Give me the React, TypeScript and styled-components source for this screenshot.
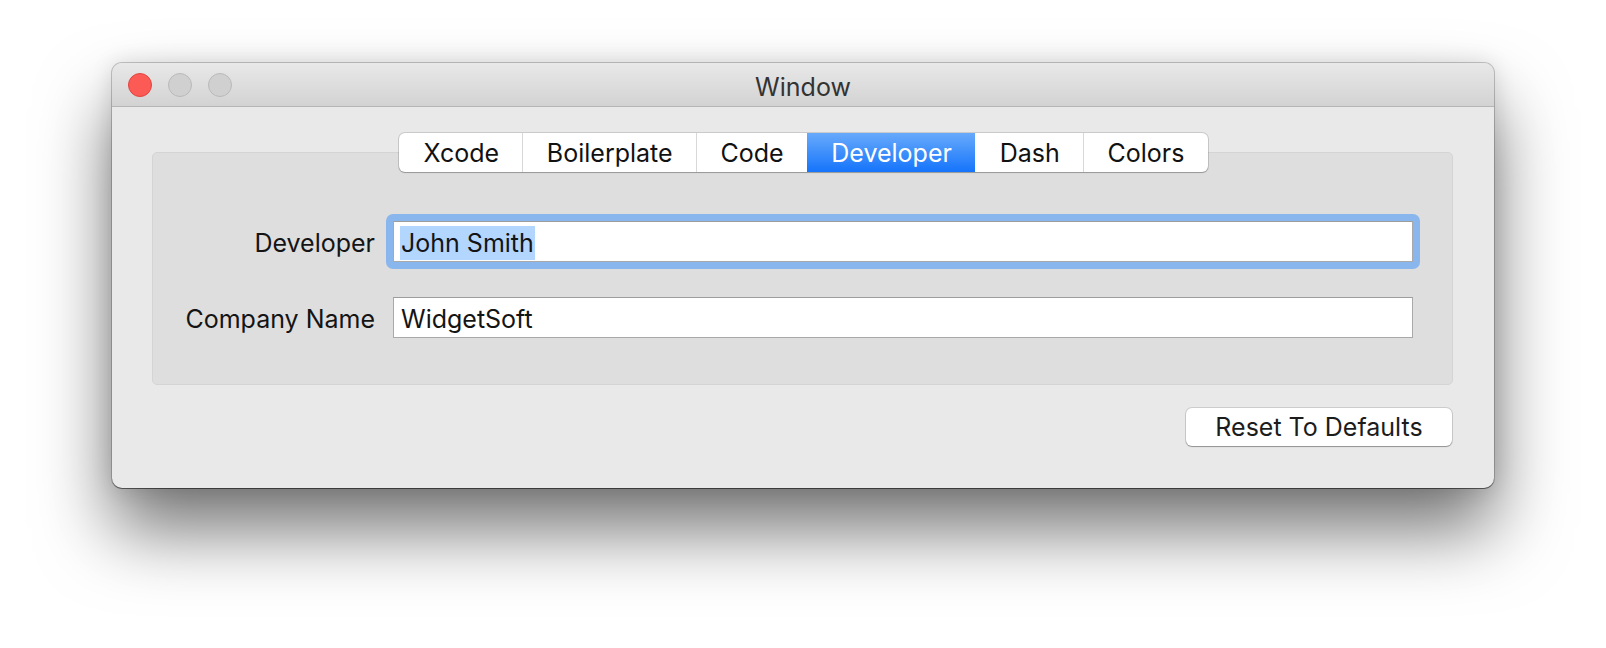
import React from "react";
import styled, { createGlobalStyle } from "styled-components";

const GlobalStyle = createGlobalStyle`
  html, body {
    margin: 0;
    padding: 0;
    background: #ffffff;
  }
  body {
    width: 1606px;
    height: 648px;
    overflow: hidden;
    font-family: "Inter", "Noto Sans", "Liberation Sans", sans-serif;
    -webkit-font-smoothing: antialiased;
  }
  * { box-sizing: border-box; }
`;

const Page = styled.div`
  width: 1606px;
  height: 648px;
  padding: 63px 0 0 112px;
`;

const Window = styled.div`
  width: 1382px;
  height: 425px;
  display: flex;
  flex-direction: column;
  background: #e9e9e9;
  border-radius: 10px;
  overflow: hidden;
  box-shadow:
    0 0 0 1px rgba(0, 0, 0, 0.2),
    0 1px 0 rgba(0, 0, 0, 0.4),
    0 0 22px rgba(0, 0, 0, 0.12),
    0 42px 72px rgba(0, 0, 0, 0.55);
`;

const TitleBar = styled.div`
  flex: none;
  height: 44px;
  display: grid;
  grid-template-columns: 1fr auto 1fr;
  align-items: center;
  background: linear-gradient(#e8e8e8, #d3d3d3);
  border-bottom: 1px solid #b5b5b5;
`;

const Lights = styled.div`
  display: flex;
  gap: 16px;
  padding-left: 16px;
`;

const Light = styled.span<{ $color: string; $edge: string }>`
  width: 24px;
  height: 24px;
  border-radius: 50%;
  background: ${(p) => p.$color};
  border: 1px solid ${(p) => p.$edge};
`;

const Title = styled.div`
  font-size: 25px;
  color: #333333;
  padding-top: 4px;
`;

const Content = styled.div`
  flex: 1;
  display: flex;
  flex-direction: column;
  padding: 26px 41px 0 40px;
`;

const TabBar = styled.div`
  align-self: center;
  display: flex;
  height: 39px;
  margin-bottom: -20px;
  margin-left: 2px;
  z-index: 1;
  background: #ffffff;
  border-radius: 6px;
  overflow: hidden;
  box-shadow:
    0 0 0 1px rgba(0, 0, 0, 0.13),
    0 1px 1px rgba(0, 0, 0, 0.22);
`;

const Tab = styled.div<{ $active?: boolean; $divider?: boolean }>`
  display: flex;
  align-items: center;
  justify-content: center;
  padding: 1px 23.4px 0;
  font-size: 25px;
  color: ${(p) => (p.$active ? "#ffffff" : "#111111")};
  background: ${(p) =>
    p.$active ? "linear-gradient(#68aafb, #1574fb)" : "transparent"};
  border-left: 1px solid ${(p) => (p.$divider ? "#d8d8d8" : "transparent")};
`;

const Box = styled.div`
  height: 233px;
  display: grid;
  grid-template-columns: 222px 1fr;
  grid-auto-rows: 41px;
  column-gap: 18px;
  row-gap: 35px;
  align-content: start;
  padding: 68px 39px 0 0;
  background: #dedede;
  border: 1px solid #d4d4d4;
  border-radius: 5px;
`;

const Label = styled.div`
  align-self: center;
  text-align: right;
  font-size: 25px;
  color: #141414;
  padding-top: 3px;
`;

const FocusRing = styled.div`
  margin: -7px;
  padding: 7px;
  border-radius: 7px;
  background: #89b6ec;
`;

const Field = styled.div`
  height: 41px;
  display: flex;
  align-items: center;
  padding: 2px 6px 0;
  background: #ffffff;
  border: 1px solid #a9a9a9;
  border-top-color: #9d9d9d;
  font-size: 25px;
  color: #141414;
`;

const Selection = styled.span`
  display: inline-block;
  line-height: 34px;
  padding: 0 1px;
  background: #b3d6fe;
`;

const Plain = styled.span`
  padding-left: 1px;
`;

const Footer = styled.div`
  display: flex;
  justify-content: flex-end;
  padding-top: 23px;
  padding-right: 1px;
`;

const Button = styled.button`
  width: 266px;
  height: 38px;
  padding: 0 0 1px;
  border: none;
  border-radius: 6px;
  background: #ffffff;
  font-family: inherit;
  font-size: 25px;
  color: #1c1c1c;
  box-shadow:
    0 0 0 1px rgba(0, 0, 0, 0.12),
    0 1px 1px rgba(0, 0, 0, 0.28);
`;

const tabs = ["Xcode", "Boilerplate", "Code", "Developer", "Dash", "Colors"];
const activeTab = 3;

export default function App() {
  return (
    <>
      <GlobalStyle />
      <Page>
        <Window>
          <TitleBar>
            <Lights>
              <Light $color="#fc5a55" $edge="#e0453f" />
              <Light $color="#d0d0d0" $edge="#b9b9b9" />
              <Light $color="#d0d0d0" $edge="#b9b9b9" />
            </Lights>
            <Title>Window</Title>
            <span />
          </TitleBar>
          <Content>
            <TabBar>
              {tabs.map((t, i) => (
                <Tab
                  key={t}
                  $active={i === activeTab}
                  $divider={i > 0 && i !== activeTab && i !== activeTab + 1}
                >
                  {t}
                </Tab>
              ))}
            </TabBar>
            <Box>
              <Label>Developer</Label>
              <FocusRing>
                <Field>
                  <Selection>John Smith</Selection>
                </Field>
              </FocusRing>
              <Label>Company Name</Label>
              <Field>
                <Plain>WidgetSoft</Plain>
              </Field>
            </Box>
            <Footer>
              <Button>Reset To Defaults</Button>
            </Footer>
          </Content>
        </Window>
      </Page>
    </>
  );
}
